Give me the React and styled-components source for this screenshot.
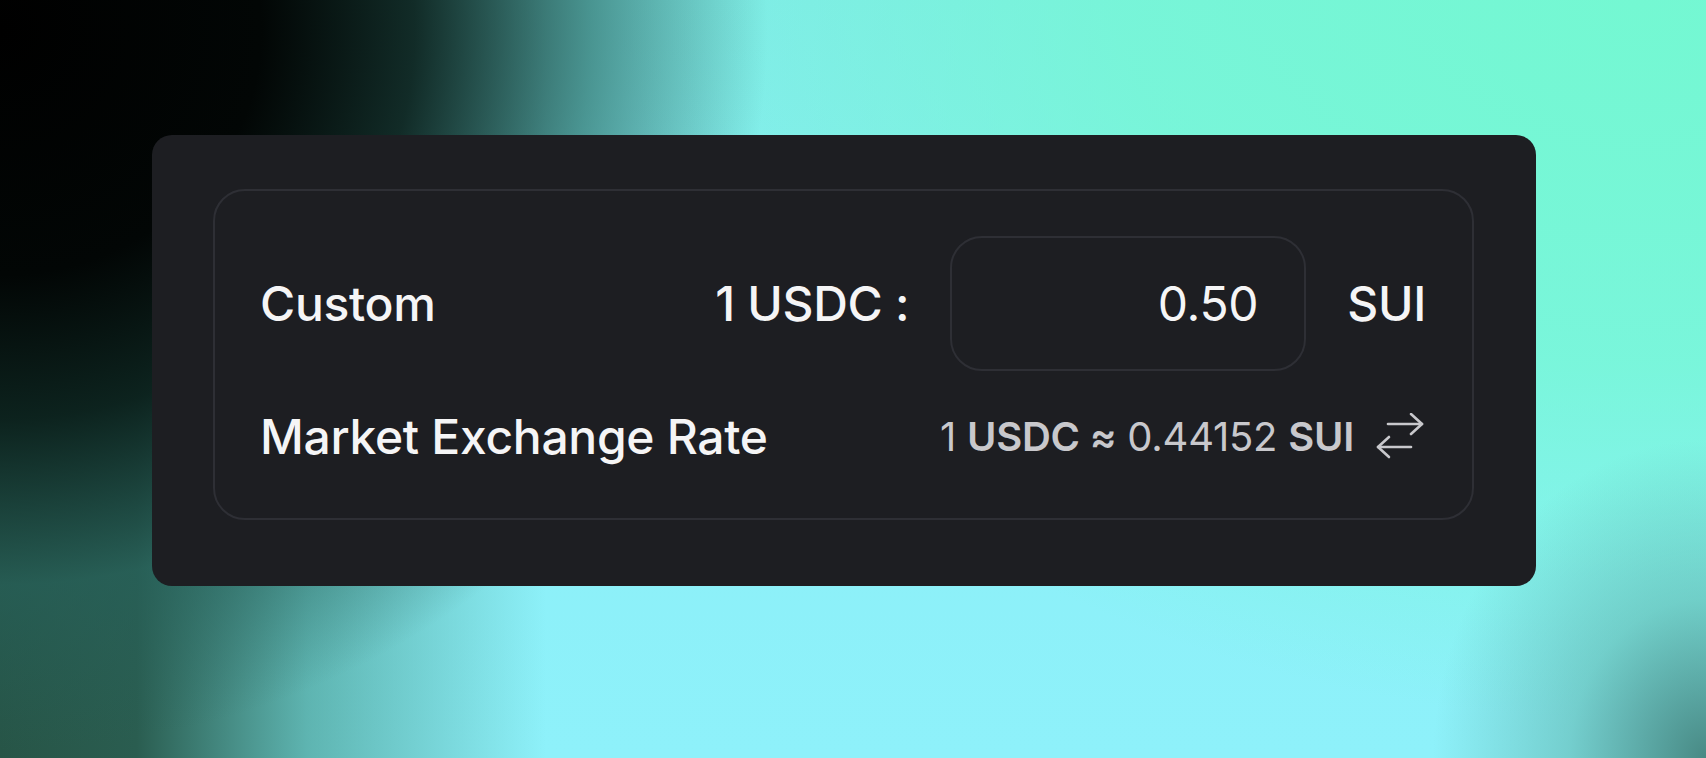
import React from "react";
import styled, { createGlobalStyle } from "styled-components";

const GlobalStyle = createGlobalStyle`
  html, body {
    margin: 0;
    padding: 0;
    width: 1706px;
    height: 758px;
    overflow: hidden;
  }
  body {
    font-family: Inter, "Noto Sans", "Liberation Sans", sans-serif;
  }
  * { box-sizing: border-box; }
`;

const Page = styled.div`
  width: 1706px;
  height: 758px;
  padding: 135px 0 0 152px;
  background:
    radial-gradient(ellipse 45% 95% at 0% 4%, #000 0%, #020605 34%, rgba(10, 30, 26, 0.92) 54%, rgba(38, 96, 90, 0.62) 77%, rgba(60, 140, 130, 0) 100%),
    linear-gradient(90deg, #275547 0%, #2a5d50 8%, rgba(62, 140, 128, 0.6) 18%, rgba(100, 200, 200, 0) 32%),
    radial-gradient(ellipse 16% 42% at 100% 100%, rgba(68, 132, 126, 0.95) 0%, rgba(90, 172, 162, 0.5) 50%, rgba(120, 230, 220, 0) 100%),
    radial-gradient(ellipse 60% 95% at 96% 0%, #74f8d2 0%, rgba(116, 248, 210, 0.75) 50%, rgba(116, 248, 210, 0) 100%),
    linear-gradient(180deg, #82eaea 0%, #8cf0f8 60%, #8ef1fa 100%);
`;

const Card = styled.div`
  width: 1384px;
  height: 451px;
  background: #1d1e22;
  border-radius: 20px;
  padding: 54px 62px 66px 61px;
`;

const Panel = styled.div`
  height: 331px;
  border: 2px solid #2e2f35;
  border-radius: 32px;
  padding: 45px 46px 0 45px;
  display: flex;
  flex-direction: column;
  gap: 37px;
`;

const Row = styled.div`
  display: flex;
  align-items: center;
  justify-content: space-between;
`;

const Label = styled.span`
  font-size: 48px;
  line-height: 58px;
  font-weight: 500;
  letter-spacing: -0.3px;
  color: #f5f5f6;
`;

const Group = styled.div`
  display: flex;
  align-items: center;
  gap: ${(p) => p.$gap}px;
`;

const RateInput = styled.input`
  width: 356px;
  height: 135px;
  background: transparent;
  border: 2px solid #2e2f35;
  border-radius: 32px;
  padding: 0 46px 0 24px;
  text-align: right;
  font-family: Inter, "Noto Sans", "Liberation Sans", sans-serif;
  font-size: 48px;
  font-weight: 400;
  letter-spacing: -0.3px;
  color: #f5f5f6;
  outline: none;
`;

const Rate = styled.span`
  font-size: 40px;
  line-height: 48px;
  color: #c8c8cc;
  font-weight: 400;
  letter-spacing: -0.25px;
  white-space: pre;
`;

const Strong = styled.b`
  font-weight: 600;
`;

const SwapButton = styled.button`
  display: flex;
  align-items: center;
  justify-content: center;
  width: 50px;
  height: 48px;
  padding: 0;
  border: none;
  background: transparent;
  color: #c8c8cc;
  cursor: pointer;
`;

function SwapIcon() {
  return (
    <svg width="50" height="48" viewBox="0 0 50 48" fill="none" stroke="currentColor" strokeWidth="2.6" strokeLinecap="round" strokeLinejoin="round">
      <path d="M12 11H46" />
      <path d="M35 1L46 11L35 21" />
      <path d="M2 34H35" />
      <path d="M13 24L2 34L13 44" />
    </svg>
  );
}

export default function App() {
  return (
    <>
      <GlobalStyle />
      <Page>
        <Card>
          <Panel>
            <Row>
              <Label>Custom</Label>
              <Group $gap={41}>
                <Label>1 USDC :</Label>
                <RateInput defaultValue="0.50" aria-label="Custom rate" />
                <Label>SUI</Label>
              </Group>
            </Row>
            <Row>
              <Label>Market Exchange Rate</Label>
              <Group $gap={22}>
                <Rate>
                  1 <Strong>USDC ≈</Strong> 0.44152 <Strong>SUI</Strong>
                </Rate>
                <SwapButton aria-label="Swap">
                  <SwapIcon />
                </SwapButton>
              </Group>
            </Row>
          </Panel>
        </Card>
      </Page>
    </>
  );
}
